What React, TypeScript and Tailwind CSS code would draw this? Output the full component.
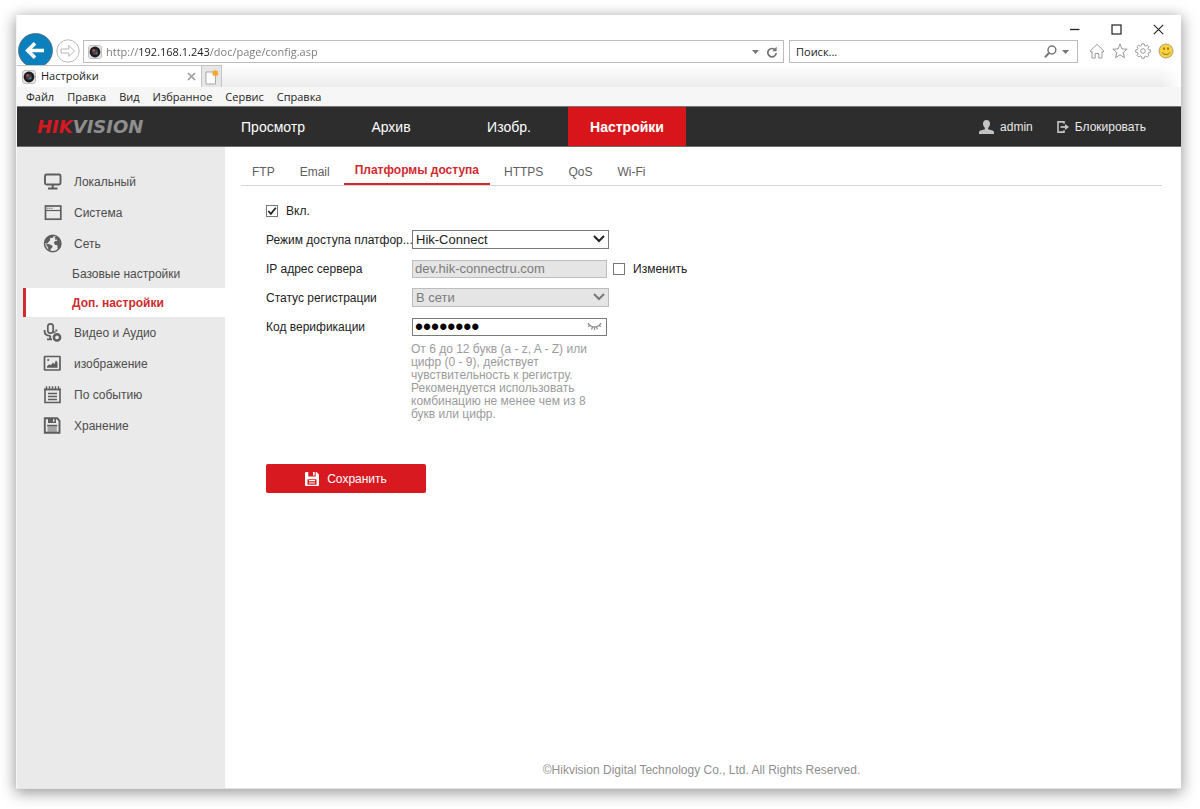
import React, { useState } from 'react';
import type { ComponentType, ReactNode } from 'react';
import clsx from 'clsx';

interface IconProps {
	className?: string;
}

interface SideItem {
	title: string;
	icon?: ComponentType<IconProps>;
	active?: boolean;
}

const menuItems = ['Файл', 'Правка', 'Вид', 'Избранное', 'Сервис', 'Справка'];

const navItems = ['Просмотр', 'Архив', 'Изобр.', 'Настройки'];

const tabs = ['FTP', 'Email', 'Платформы доступа', 'HTTPS', 'QoS', 'Wi-Fi'];

const sideItems: SideItem[] = [
	{ title: 'Локальный', icon: MonitorIcon },
	{ title: 'Система', icon: WindowIcon },
	{ title: 'Сеть', icon: GlobeIcon },
	{ title: 'Базовые настройки' },
	{ title: 'Доп. настройки', active: true },
	{ title: 'Видео и Аудио', icon: MicIcon },
	{ title: 'изображение', icon: PictureIcon },
	{ title: 'По событию', icon: EventIcon },
	{ title: 'Хранение', icon: DiskIcon },
];

export default function App() {
	return (
		<div className="flex min-h-screen flex-col bg-white pt-[15px] pr-[19px] pb-[20px] pl-[16px] font-['Liberation_Sans',Arial,sans-serif]">
			<div className="flex flex-1 flex-col border-b border-l border-b-[#e4e4e4] border-l-[#f6f6f6] bg-white shadow-[0_3px_14px_1px_rgba(0,0,0,0.4)]">
				<BrowserChrome />
				<Header />
				<div className="flex flex-1">
					<Sidebar />
					<main className="flex flex-1 flex-col pr-[19px] pl-[16px]">
						<Tabs />
						<PlatformForm />
						<footer className="mt-auto pb-[10px] text-center text-[12px] leading-[16px] text-[#8f8f8f]">
							©Hikvision Digital Technology Co., Ltd. All Rights Reserved.
						</footer>
					</main>
				</div>
			</div>
		</div>
	);
}

function BrowserChrome() {
	return (
		<div className="font-['Open_Sans','Noto_Sans',sans-serif] text-[11px] text-[#1c1c1c]">
			<div className="flex h-[50px] items-end gap-[3px] pl-px">
				<button aria-label="Назад">
					<svg viewBox="0 0 35 32" className="block h-[32px] w-[35px]">
						<circle cx="17.5" cy="17.5" r="17" fill="#0c80bd" stroke="#57676f" strokeWidth="0.8" />
						<path d="M26 17.5H10.5M17 10.2l-7.3 7.3 7.3 7.3" fill="none" stroke="#fff" strokeWidth="3.6" />
					</svg>
				</button>
				<button aria-label="Вперед">
					<svg viewBox="0 0 24 28" className="block h-[28px] w-[24px]">
						<circle cx="12" cy="14" r="11.2" fill="#fff" stroke="#b9b9b9" />
						<path d="M5 12h7.800V8.500L18.500 14l-5.700 5.500V16H5z" fill="none" stroke="#b5b5b5" />
					</svg>
				</button>
				<div className="flex flex-1 flex-col">
					<div className="flex h-[25px] items-center justify-end gap-[31px] pt-[3px] pr-[17px] text-[#222]">
						<button aria-label="Свернуть">
							<svg viewBox="0 0 11 11" className="block size-[11px]"><path d="M1 5.5h9.5" stroke="currentColor" strokeWidth="1.3" /></svg>
						</button>
						<button aria-label="Развернуть">
							<svg viewBox="0 0 11 11" className="block size-[11px]"><rect x="1" y="1" width="9" height="9" fill="none" stroke="currentColor" strokeWidth="1.2" /></svg>
						</button>
						<button aria-label="Закрыть">
							<svg viewBox="0 0 11 11" className="block size-[11px]"><path d="M.8.8l9.4 9.4M10.2.8L.8 10.2" stroke="currentColor" strokeWidth="1.1" /></svg>
						</button>
					</div>
					<div className="flex h-[25px] items-start gap-[5px]">
						<div className="flex h-[23px] flex-1 items-center border border-[#bcbcbc] pr-[5px] pl-[4px]">
							<Favicon />
							{/* host part of the address is darker than the rest */}
							<input
								aria-label="Адрес"
								defaultValue="http://192.168.1.243/doc/page/config.asp"
								className="ml-[4px] h-[20px] min-w-0 flex-1 bg-[linear-gradient(90deg,#777_32px,#1c1c1c_32px,#1c1c1c_104px,#777_104px)] bg-clip-text text-transparent caret-black outline-none"
							/>
							<CaretIcon className="mr-[7px] h-[4px] w-[7px] text-[#777]" />
							<svg viewBox="0 0 12 12" className="size-[12px]">
								<path d="M9.4 4.2A4.2 4.2 0 1 0 10.2 7" fill="none" stroke="#737373" strokeWidth="1.7" />
								<path d="M10.6.8v4.5H6.2z" fill="#737373" />
							</svg>
						</div>
						<div className="flex h-[23px] w-[289px] items-center border border-[#bcbcbc] pr-[8px] pl-[6px]">
							<input aria-label="Поиск" placeholder="Поиск..." className="h-[20px] min-w-0 flex-1 outline-none placeholder:text-[#1c1c1c]" />
							<svg viewBox="0 0 13 13" className="mr-[5px] size-[13px]" fill="none" stroke="#777">
								<circle cx="7.9" cy="5" r="3.9" strokeWidth="1.5" />
								<path d="M5.2 7.8L1 12.2" strokeWidth="2" />
							</svg>
							<CaretIcon className="h-[4px] w-[7px] text-[#777]" />
						</div>
						<div className="flex h-[21px] items-center gap-[7px] pr-[7px] pl-[6px]">
							<HomeIcon />
							<StarIcon />
							<GearIcon />
							<SmileIcon />
						</div>
					</div>
				</div>
			</div>

			<div className="flex h-[22px] bg-linear-to-b from-white to-[#ececec]">
				<div className="flex w-[185px] items-center border-t border-r border-[#c4c4c4] bg-white pr-[5px] pl-[5px]">
					<Favicon />
					<span className="ml-[5px] flex-1">Настройки</span>
					<button aria-label="Закрыть вкладку">
						<svg viewBox="0 0 9 9" className="block size-[9px]"><path d="M1 1l7 7M8 1L1 8" stroke="#9c9c9c" strokeWidth="1.7" /></svg>
					</button>
				</div>
				<button aria-label="Новая вкладка" className="flex w-[20px] items-center justify-center border-t border-r border-[#c4c4c4] bg-[#e6e6e6]">
					<svg viewBox="0 0 14 16" className="h-[16px] w-[14px]">
						<path d="M1 3h7l2.5 2.5V15H1z" fill="#fff" stroke="#a8a8a8" />
						<path d="M10.3.4l.9 1.7 1.8-.5-.5 1.8 1.5.9-1.5.9.5 1.8-1.8-.5-.9 1.6-.9-1.6-1.8.5.5-1.8-1.5-.9 1.5-.9-.5-1.8 1.8.5z" fill="#f0a92e" />
					</svg>
				</button>
				<div className="flex-1" />
				<div className="w-[20px] bg-linear-to-l from-white to-transparent" />
			</div>

			<div className="flex h-[20px] items-center gap-[13px] border-b border-[#777] bg-[#f6f6f6] pt-px pl-[9px]">
				{menuItems.map((item) => (
					<button key={item}>{item}</button>
				))}
			</div>
		</div>
	);
}

function Header() {
	return (
		<header className="flex h-[40px] border-b border-[#6d6d6d] bg-[#2d2d2d] pr-[35px] text-white">
			<a href="#home" className="flex w-[197px] items-center pl-[20px] font-['DejaVu_Sans',sans-serif] text-[18px] font-bold italic text-[#8e8e8e]">
				<span className="text-[#d8181f]">HIK</span>VISION
			</a>
			<nav className="flex">
				{navItems.map((item) => (
					<a
						key={item}
						href="#nav"
						className={clsx(
							'flex w-[118px] items-center justify-center pt-[2px] text-[14px]',
							item === 'Настройки' && 'bg-[#d9151c] font-bold',
						)}
					>
						{item}
					</a>
				))}
			</nav>
			<div className="ml-auto flex items-center gap-[24px] text-[12px] text-[#e8e8e8]">
				<a href="#user" className="flex items-center gap-[6px]">
					<svg viewBox="0 0 15 14" className="h-[14px] w-[15px]" fill="#c4c4c4">
						<path d="M7.5 0C5.2 0 4 1.6 4 3.8c0 1.7.8 3.2 1.9 4.1v1.3L1.5 10.6C.5 11 0 11.7 0 12.7V14h15v-1.3c0-1-.5-1.7-1.5-2.1L9.1 9.2V7.9C10.2 7 11 5.5 11 3.8 11 1.6 9.8 0 7.5 0z" />
					</svg>
					admin
				</a>
				<a href="#lock" className="flex items-center gap-[6px]">
					<svg viewBox="0 0 12 12" className="size-[12px]" fill="none" stroke="#c4c4c4">
						<path d="M7 2.8V.9H1v10.2h6V9.2" strokeWidth="1.6" />
						<path d="M3.5 6H10" strokeWidth="1.7" />
						<path d="M8 2.9L12 6 8 9.1z" fill="#c4c4c4" stroke="none" />
					</svg>
					Блокировать
				</a>
			</div>
		</header>
	);
}

function Sidebar() {
	return (
		<aside className="w-[208px] shrink-0 bg-[#eaeaea] pt-[19px] pl-[6px] text-[12px] text-[#4c4c4c]">
			{sideItems.map(({ title, icon: Icon, active }) =>
				Icon ? (
					<a key={title} href="#section" className="flex h-[31px] items-center gap-[12px] pl-[20px]">
						<Icon className="size-[19px] text-[#5e5e5e]" />
						{title}
					</a>
				) : (
					<a
						key={title}
						href="#section"
						className={clsx(
							'flex h-[29px] items-center border-l-[3px] pl-[46px]',
							active ? 'border-[#d12a31] bg-white font-bold text-[#d12a31]' : 'border-transparent',
						)}
					>
						{title}
					</a>
				),
			)}
		</aside>
	);
}

function Tabs() {
	return (
		<nav className="flex h-[39px] gap-[3px] border-b border-[#d4d4d4] text-[12px] text-[#606060]">
			{tabs.map((tab) => (
				<a
					key={tab}
					href="#tab"
					className={clsx(
						'flex items-center border-b-2 px-[11px]',
						tab === 'Платформы доступа'
							? 'border-[#d12a31] pt-[10px] font-bold text-[#d12a31]'
							: 'border-transparent pt-[14px]',
					)}
				>
					{tab}
				</a>
			))}
		</nav>
	);
}

function PlatformForm() {
	const [enabled, setEnabled] = useState(true);
	const [custom, setCustom] = useState(false);

	return (
		<form className="pt-[10px] pl-[25px] text-[12px] text-[#222]">
			<div className="flex h-[29px] items-center">
				<Checkbox id="enable" label="Вкл." checked={enabled} onChange={setEnabled} />
			</div>
			<Row id="mode" label="Режим доступа платфор...">
				<Select id="mode" value="Hik-Connect" />
			</Row>
			<Row id="server" label="IP адрес сервера">
				<input
					id="server"
					disabled={!custom}
					defaultValue="dev.hik-connectru.com"
					className="mr-[6px] h-[18px] w-[195px] border border-[#bdbdbd] bg-[#e5e5e5] px-[2px] text-[13px] text-[#7b7b7b]"
				/>
				<Checkbox id="custom" label="Изменить" checked={custom} onChange={setCustom} />
			</Row>
			<Row id="status" label="Статус регистрации">
				<Select id="status" value="В сети" disabled />
			</Row>
			<Row id="code" label="Код верификации">
				<div className="flex h-[18px] w-[195px] items-center border border-[#7a7a7a] pr-[4px] pl-[2px]">
					<input id="code" type="password" defaultValue="12345678" className="h-[16px] min-w-0 flex-1 pt-[2px] text-[23px] leading-[14px] text-black outline-none" />
					<button type="button" aria-label="Показать код">
						<svg viewBox="0 0 15 9" className="block h-[9px] w-[15px]" fill="none" stroke="#8c8c8c">
							<path d="M1 1c1.5 2.7 3.8 4 6.5 4S12.500 3.700 14 1" strokeWidth="1.4" />
							<path d="M3.2 3.5L1 4.5M5.5 4.7L4.6 7.5M9.5 4.7l.9 2.8M11.8 3.5L14 4.5M7.5 5v3" strokeWidth="1.2" />
						</svg>
					</button>
				</div>
			</Row>
			<p className="mt-[2px] ml-[145px] text-[12px] leading-[13px] text-[#9b9b9b]">
				От 6 до 12 букв (a - z, A - Z) или
				<br />
				цифр (0 - 9), действует
				<br />
				чувствительность к регистру.
				<br />
				Рекомендуется использовать
				<br />
				комбинацию не менее чем из 8
				<br />
				букв или цифр.
			</p>
			<button type="button" className="mt-[43px] flex h-[29px] w-[160px] items-center justify-center gap-[8px] rounded-[2px] bg-[#d8191f] text-white">
				<svg viewBox="0 0 14 14" className="size-[14px]">
					<path fillRule="evenodd" fill="#fff" d="M1 0h10.5L14 2.5V13a1 1 0 0 1-1 1H1a1 1 0 0 1-1-1V1a1 1 0 0 1 1-1zm2.3 0v4.6h7.4V0h-1v3.5H8V0zM2.5 7.2v5.5h9V7.2z" />
					<path d="M4 8.7h6M4 11h6" stroke="#fff" strokeWidth="1.2" />
				</svg>
				Сохранить
			</button>
		</form>
	);
}

function Row({ id, label, children }: { id: string; label: string; children: ReactNode }) {
	return (
		<div className="flex h-[29px] items-center">
			<label htmlFor={id} className="w-[146px] whitespace-nowrap">{label}</label>
			{children}
		</div>
	);
}

function Select({ id, value, disabled }: { id: string; value: string; disabled?: boolean }) {
	return (
		<div className="relative">
			<select
				id={id}
				disabled={disabled}
				defaultValue={value}
				className="block h-[19px] w-[197px] appearance-none border border-[#7a7a7a] bg-white px-[3px] text-[13px] leading-[17px] text-[#222] opacity-100 disabled:border-[#bdbdbd] disabled:bg-[#e5e5e5] disabled:text-[#7b7b7b]"
			>
				<option>{value}</option>
			</select>
			<svg
				viewBox="0 0 12 8"
				className={clsx('pointer-events-none absolute top-[5px] right-[4px] h-[8px] w-[12px]', disabled ? 'text-[#777]' : 'text-[#222]')}
			>
				<path d="M1 1l5 5 5-5" fill="none" stroke="currentColor" strokeWidth="2" />
			</svg>
		</div>
	);
}

interface CheckboxProps {
	id: string;
	label: string;
	checked: boolean;
	onChange: (value: boolean) => void;
}

function Checkbox({ id, label, checked, onChange }: CheckboxProps) {
	return (
		<div className="flex items-center gap-[8px]">
			<span className="relative">
				<input
					id={id}
					type="checkbox"
					checked={checked}
					onChange={(e) => onChange(e.target.checked)}
					className="block size-[12px] appearance-none border border-[#777] bg-white"
				/>
				{checked && (
					<svg viewBox="0 0 12 12" className="pointer-events-none absolute inset-0 size-[12px]">
						<path d="M2.3 6l2.6 2.8L9.8 2.8" fill="none" stroke="#222" strokeWidth="1.8" />
					</svg>
				)}
			</span>
			<label htmlFor={id}>{label}</label>
		</div>
	);
}

function Favicon() {
	return (
		<svg viewBox="0 0 14 14" className="size-[14px] shrink-0">
			<rect x="0.5" y="0.5" width="13" height="13" rx="2.5" fill="#e3e3e3" stroke="#c2c2c2" />
			<circle cx="7" cy="7" r="5.4" fill="#1d1d1f" />
			<circle cx="7" cy="7" r="3" fill="#3d4148" />
			<circle cx="5.6" cy="5.4" r="1.3" fill="#c04a4a" />
			<circle cx="8.4" cy="8.2" r="1" fill="#4d8a94" />
		</svg>
	);
}

function CaretIcon({ className }: IconProps) {
	return (
		<svg viewBox="0 0 7 4" className={className}>
			<path d="M0 0h7L3.5 4z" fill="currentColor" />
		</svg>
	);
}

function HomeIcon() {
	return (
		<svg viewBox="0 0 16 16" className="size-[16px]" fill="none" stroke="#9a9a9a">
			<path d="M1 8.2L8 1.3l7 6.9-1.2 1-.8-.8V15H9.8v-4.5H6.2V15H3V8.4l-.8.8z" />
		</svg>
	);
}

function StarIcon() {
	return (
		<svg viewBox="0 0 16 16" className="size-[16px]" fill="none" stroke="#9a9a9a">
			<path d="M8 1l1.9 4.9 5.3.3-4.1 3.3 1.4 5.2L8 11.8l-4.5 2.9 1.4-5.2L.8 6.2l5.3-.3z" />
		</svg>
	);
}

function GearIcon() {
	return (
		<svg viewBox="0 0 16 16" className="size-[16px]" fill="none" stroke="#9a9a9a">
			<path d="M6.8.8h2.4l.4 1.9 1.1.5 1.7-1.1 1.6 1.7-1.1 1.6.5 1.2 1.9.3v2.3l-1.9.4-.5 1.1 1.1 1.7-1.7 1.6-1.6-1-1.1.4-.4 1.9H6.8l-.4-1.9-1.1-.4-1.7 1L2 12.4l1-1.7-.4-1.1-1.9-.4V6.9l1.9-.3L3 5.4 2 3.8l1.6-1.7 1.7 1.1 1.1-.5z" />
			<circle cx="8" cy="8" r="2.3" />
		</svg>
	);
}

function SmileIcon() {
	return (
		<svg viewBox="0 0 16 16" className="size-[16px]">
			<circle cx="8" cy="8" r="7" fill="#fbd23c" stroke="#a9a17f" />
			<path d="M6 4.5v2.3M10 4.5v2.3" stroke="#7a6316" strokeWidth="1.5" />
			<path d="M4 9.3c1.6 2.9 6.4 2.9 8 0" fill="none" stroke="#8a7019" />
		</svg>
	);
}

function MonitorIcon({ className }: IconProps) {
	return (
		<svg viewBox="0 0 19 19" className={className} fill="none" stroke="currentColor">
			<rect x="2" y="2.5" width="15.5" height="10" rx="1.5" strokeWidth="1.9" />
			<path d="M9.7 12.5V16M5 16.4h9.5" strokeWidth="2" />
		</svg>
	);
}

function WindowIcon({ className }: IconProps) {
	return (
		<svg viewBox="0 0 19 19" className={className} fill="none" stroke="currentColor">
			<rect x="2.5" y="3" width="15.3" height="13.2" strokeWidth="1.7" />
			<path d="M2.5 7.5h15.3" strokeWidth="1.2" />
			<path d="M4.2 5.3h1.2M6.2 5.3h1.2M8.2 5.3h1.2" strokeWidth="1.1" />
		</svg>
	);
}

function GlobeIcon({ className }: IconProps) {
	return (
		<svg viewBox="0 0 19 19" className={className}>
			<circle cx="9.7" cy="9.5" r="8.2" fill="none" stroke="currentColor" strokeWidth="1.5" />
			<path d="M8.5 1.5C4 2 1.5 5.5 1.7 9l3 1 2 .2 3 1.8-.8 2-1.2 1-.6 2.3-1.6-.6-.4-3.3-2-2.4 1-1.2 3-3.5-.2-2 2.6-.5 1.4-1.3z" fill="currentColor" />
			<path d="M11.5 3l3.8.3 2.5 4.7.2 3-2 4-1.4-.5-.2-3.3-2.6-.5-1-2.2 1.5-1.5 2-.2-.3-1.3-2 .3.3-1.3z" fill="currentColor" />
		</svg>
	);
}

function MicIcon({ className }: IconProps) {
	return (
		<svg viewBox="0 0 19 19" className={className} fill="none" stroke="currentColor">
			<rect x="4.8" y="0.9" width="5.4" height="9.2" rx="2.7" strokeWidth="1.7" />
			<path d="M1.6 7v1.3c0 2.8 2.2 4.5 5.6 4.5M7.2 12.5V16M4 16.3h5M13.3 6.5V8.5" strokeWidth="1.8" />
			<circle cx="14" cy="14.4" r="3.1" strokeWidth="2.5" />
			<path d="M10.5 10l2-1.5" strokeWidth="1.5" />
		</svg>
	);
}

function PictureIcon({ className }: IconProps) {
	return (
		<svg viewBox="0 0 19 19" className={className}>
			<rect x="1.5" y="2.5" width="15.5" height="13.5" rx="0.5" fill="none" stroke="currentColor" strokeWidth="1.7" />
			<path d="M4 13.7v-1.5l2.3-2 1.5 1 2.2-2.7 1.3 1.7 1.7-4 1.5 2.5v5z" fill="currentColor" />
			<circle cx="5.2" cy="6" r="1.1" fill="currentColor" />
		</svg>
	);
}

function EventIcon({ className }: IconProps) {
	return (
		<svg viewBox="0 0 19 19" className={className} fill="none" stroke="currentColor">
			<path d="M2 3.5V17.5h15V3.5" strokeWidth="1.6" />
			<path d="M1.2 4.5h16.6" strokeWidth="1.8" />
			<path d="M3.5 1.2v3M6.5 1.2v3M9.5 1.2v3M12.5 1.2v3M15.5 1.2v3" strokeWidth="1.4" />
			<path d="M5 8.5h9M5 11.5h9M5 14.5h9" strokeWidth="1.3" />
		</svg>
	);
}

function DiskIcon({ className }: IconProps) {
	return (
		<svg viewBox="0 0 19 19" className={className}>
			<path d="M1.8 2.2h12.4l2.3 2.6v12H1.8z" fill="none" stroke="currentColor" strokeWidth="1.9" />
			<path d="M5 2h8v5H5zM10 3v2.8h1.400V3z" fill="currentColor" fillRule="evenodd" />
			<path d="M4.500 9.800h9.300V16H4.500z" fill="currentColor" fillOpacity="0.5" />
			<path d="M4 9.500h10.300" stroke="currentColor" strokeWidth="1.4" />
		</svg>
	);
}
